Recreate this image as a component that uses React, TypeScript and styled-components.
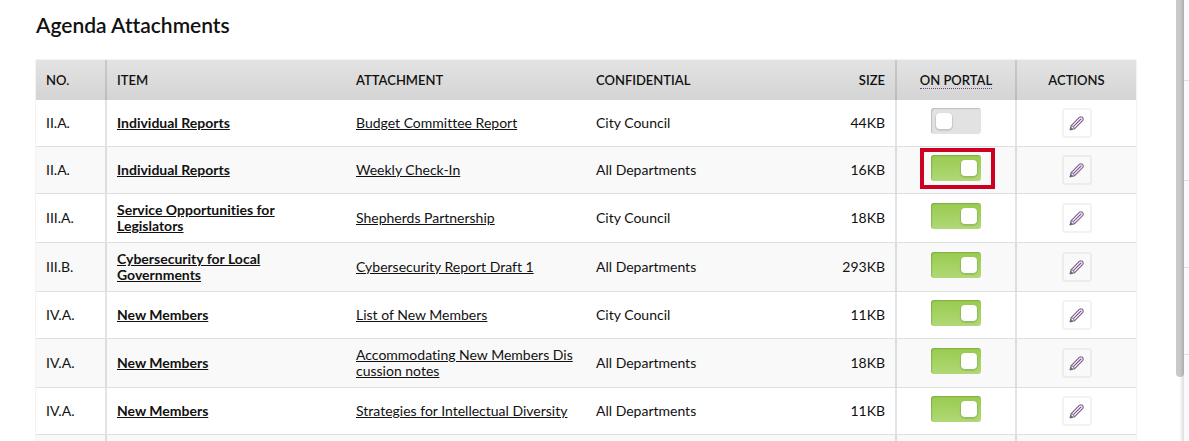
import React from 'react';
import styled, { createGlobalStyle } from 'styled-components';

const GlobalStyle = createGlobalStyle`
  * { box-sizing: border-box; }
  body {
    margin: 0;
    background: #fff;
    color: #111;
    font: 400 14px/16px Lato, "Open Sans", sans-serif;
    font-variant-ligatures: none;
  }
`;

const Page = styled.div`
  display: flex;
  height: 100vh;
  overflow: hidden;
`;

const Main = styled.main`
  flex: 1;
  min-width: 0;
  padding: 12px 40px 0 36px;
`;

const Title = styled.h1`
  margin: 0 0 22px;
  font-size: 21px;
  line-height: 26px;
  font-weight: 600;
`;

const Table = styled.table`
  width: 100%;
  table-layout: fixed;
  border-collapse: separate;
  border-spacing: 0;
  border-radius: 2px;
  box-shadow: 0 0 0 1px #f2f2f2;
`;

const HeadRow = styled.tr`
  height: 40px;
  background: linear-gradient(#e3e3e3, #d4d4d4);
`;

type CellProps = { $align?: 'left' | 'right' | 'center'; $divided?: boolean };

const HeadCell = styled.th<CellProps & { $width?: number }>`
  width: ${(p) => (p.$width ? `${p.$width}px` : 'auto')};
  padding: 0 10px;
  font-size: 13px;
  font-weight: 600;
  text-align: ${(p) => p.$align ?? 'left'};
  border-right: ${(p) => (p.$divided ? '2px solid rgba(0, 0, 0, 0.11)' : '0')};
`;

const Hint = styled.abbr`
  text-decoration: none;
  border-bottom: 1px dotted #6b4a8a;
`;

const Row = styled.tr`
  background: #fff;
  &:nth-child(even) { background: #f9f9f9; }
`;

const Cell = styled.td<CellProps>`
  height: 47px;
  padding: 8px 10px;
  vertical-align: middle;
  text-align: ${(p) => p.$align ?? 'left'};
  border-bottom: 1px solid #dfdfdf;
  border-right: ${(p) => (p.$divided ? '2px solid rgba(0, 0, 0, 0.11)' : '0')};
`;

const ItemLink = styled.a`
  color: inherit;
  font-weight: 700;
`;

const FileLink = styled.a`
  color: inherit;
  word-break: break-all;
`;

const ToggleBox = styled.label`
  position: relative;
  display: block;
  width: 50px;
  height: 30px;
  margin: 0 auto;
`;

const Toggle = styled.input`
  appearance: none;
  display: block;
  width: 50px;
  height: 26px;
  margin: 0;
  padding: 5px;
  border-radius: 3px;
  background: #e2e2e2;
  box-shadow: inset 1px 1px 1px rgba(0, 0, 0, 0.16);
  cursor: pointer;

  &::before {
    content: '';
    display: block;
    width: 16px;
    height: 16px;
    border-radius: 4px;
    background: #fff;
    box-shadow: 0 1px 1px 1px rgba(0, 0, 0, 0.12);
  }

  &:checked {
    padding-left: 30px;
    background: linear-gradient(#98cb4f, #b0d876);
  }
`;

const Highlight = styled.span`
  position: absolute;
  top: -7px;
  left: -11px;
  width: 75px;
  height: 41px;
  border: 4px solid #cc0022;
  pointer-events: none;
`;

const EditButton = styled.button`
  display: flex;
  align-items: center;
  justify-content: center;
  width: 30px;
  height: 30px;
  margin: 0 auto;
  padding: 0;
  border: 2px solid rgba(0, 0, 0, 0.05);
  border-radius: 3px;
  background: transparent;
  cursor: pointer;
`;

const ScrollTrack = styled.div`
  width: 8px;
  background: linear-gradient(90deg, #fff 40%, #ddd);
`;

const ScrollThumb = styled.div`
  height: calc(100% - 64px);
  border-radius: 0 0 4px 4px;
  background: linear-gradient(90deg, #c9c9c9 50%, #acacac);
`;

const SidePanel = styled.aside`
  width: 5px;
  background: #fafafa;
`;

const SideRow = styled.div<{ $height: number }>`
  height: ${(p) => p.$height}px;
  border-bottom: 1px solid #dfdfdf;
`;

type Attachment = {
  no: string;
  item: string;
  file: string;
  access: string;
  size: string;
  on: boolean;
  marked?: boolean;
};

const attachments: Attachment[] = [
  { no: 'II.A.', item: 'Individual Reports', file: 'Budget Committee Report', access: 'City Council', size: '44KB', on: false },
  { no: 'II.A.', item: 'Individual Reports', file: 'Weekly Check-In', access: 'All Departments', size: '16KB', on: true, marked: true },
  { no: 'III.A.', item: 'Service Opportunities for Legislators', file: 'Shepherds Partnership', access: 'City Council', size: '18KB', on: true },
  { no: 'III.B.', item: 'Cybersecurity for Local Governments', file: 'Cybersecurity Report Draft 1', access: 'All Departments', size: '293KB', on: true },
  { no: 'IV.A.', item: 'New Members', file: 'List of New Members', access: 'City Council', size: '11KB', on: true },
  { no: 'IV.A.', item: 'New Members', file: 'Accommodating New Members Discussion notes', access: 'All Departments', size: '18KB', on: true },
  { no: 'IV.A.', item: 'New Members', file: 'Strategies for Intellectual Diversity', access: 'All Departments', size: '11KB', on: true },
];

const PencilIcon = () => (
  <svg width="16" height="16" viewBox="0 0 16 16" fill="none" stroke="#7d5a8c" strokeWidth="1.1" strokeLinejoin="round" strokeLinecap="round" aria-hidden="true">
    <path d="M1.2 14.8L2.2 10.6L10.6 2.2a2.3 2.3 0 0 1 3.2 3.2L5.4 13.8z" />
    <path d="M4.6 11.4L12 4" />
    <path d="M2.2 10.6q1.9-.2 1.8 1.4q1.5 0 1.4 1.8" strokeWidth="0.8" />
    <path d="M1.2 14.8l.6-2.2 1.6 1.6z" fill="#7d5a8c" />
  </svg>
);

export default function App() {
  return (
    <Page>
      <GlobalStyle />
      <Main>
        <Title>Agenda Attachments</Title>
        <Table>
          <thead>
            <HeadRow>
              <HeadCell $width={71} $divided>NO.</HeadCell>
              <HeadCell $width={239}>ITEM</HeadCell>
              <HeadCell $width={240}>ATTACHMENT</HeadCell>
              <HeadCell>CONFIDENTIAL</HeadCell>
              <HeadCell $width={120} $align="right" $divided>SIZE</HeadCell>
              <HeadCell $width={120} $align="center" $divided><Hint>ON PORTAL</Hint></HeadCell>
              <HeadCell $width={119} $align="center">ACTIONS</HeadCell>
            </HeadRow>
          </thead>
          <tbody>
            {attachments.map((a) => (
              <Row key={a.file}>
                <Cell $divided>{a.no}</Cell>
                <Cell><ItemLink href="#item">{a.item}</ItemLink></Cell>
                <Cell><FileLink href="#file">{a.file}</FileLink></Cell>
                <Cell>{a.access}</Cell>
                <Cell $align="right" $divided>{a.size}</Cell>
                <Cell $divided>
                  <ToggleBox>
                    <Toggle type="checkbox" role="switch" defaultChecked={a.on} aria-label={`Show ${a.file} on portal`} />
                    {a.marked && <Highlight />}
                  </ToggleBox>
                </Cell>
                <Cell>
                  <EditButton type="button" aria-label={`Edit ${a.file}`}><PencilIcon /></EditButton>
                </Cell>
              </Row>
            ))}
            <Row>
              <Cell $divided />
              <Cell />
              <Cell />
              <Cell />
              <Cell $divided />
              <Cell $divided />
              <Cell />
            </Row>
          </tbody>
        </Table>
      </Main>
      <ScrollTrack><ScrollThumb /></ScrollTrack>
      <SidePanel>
        <SideRow $height={81} />
        <SideRow $height={100} />
        <SideRow $height={87} />
        <SideRow $height={87} />
      </SidePanel>
    </Page>
  );
}
